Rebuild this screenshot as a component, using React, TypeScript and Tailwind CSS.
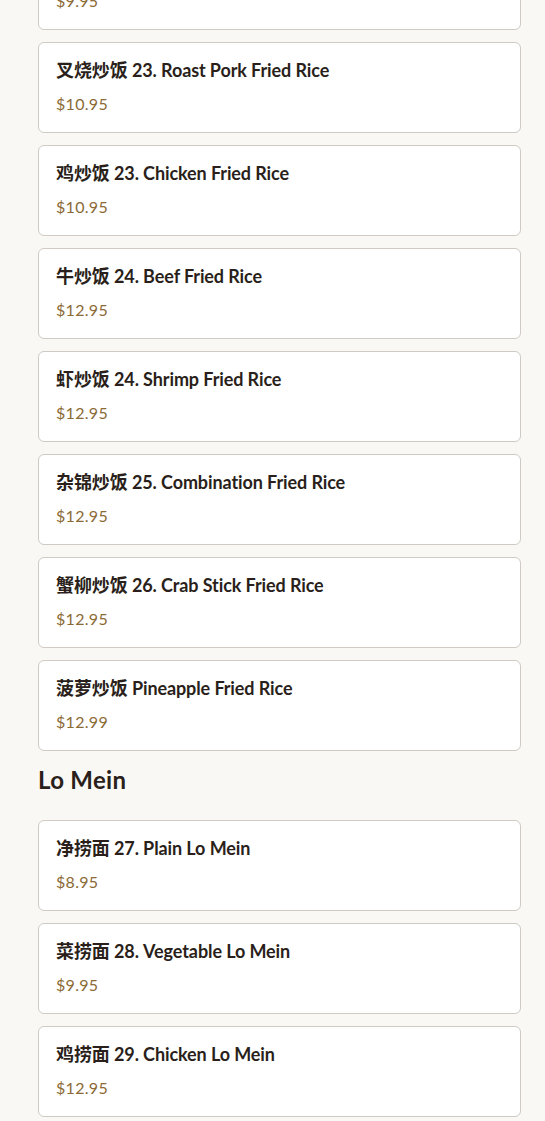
type Item = { zh: string; name: string; price: string };

const friedRice: Item[] = [
  { zh: "菜炒饭", name: "22. Vegetable Fried Rice", price: "$9.95" },
  { zh: "叉烧炒饭", name: "23. Roast Pork Fried Rice", price: "$10.95" },
  { zh: "鸡炒饭", name: "23. Chicken Fried Rice", price: "$10.95" },
  { zh: "牛炒饭", name: "24. Beef Fried Rice", price: "$12.95" },
  { zh: "虾炒饭", name: "24. Shrimp Fried Rice", price: "$12.95" },
  { zh: "杂锦炒饭", name: "25. Combination Fried Rice", price: "$12.95" },
  { zh: "蟹柳炒饭", name: "26. Crab Stick Fried Rice", price: "$12.95" },
  { zh: "菠萝炒饭", name: "Pineapple Fried Rice", price: "$12.99" },
];

const loMein: Item[] = [
  { zh: "净捞面", name: "27. Plain Lo Mein", price: "$8.95" },
  { zh: "菜捞面", name: "28. Vegetable Lo Mein", price: "$9.95" },
  { zh: "鸡捞面", name: "29. Chicken Lo Mein", price: "$12.95" },
];

function MenuCard({ item }: { item: Item }) {
  return (
    <div className="flex flex-col gap-2 rounded-md border border-[#cfcac4] bg-white px-[17px] pt-[13px] pb-4">
      <div className="text-lg leading-7 font-bold text-[#2a1f1a] tracking-[-0.1px]">
        {item.zh} {item.name}
      </div>
      <div className="text-base leading-6 tracking-[0.3px] text-[#8b6a35]">{item.price}</div>
    </div>
  );
}

export default function App() {
  return (
    <div
      className="h-screen overflow-hidden bg-[#faf8f5] px-[38px] pr-6"
      style={{ fontFamily: "Lato, 'Noto Sans', 'Noto Sans CJK SC', sans-serif" }}
    >
      <div className="-mt-[61px] flex flex-col gap-3">
        {friedRice.map((item, i) => (
          <MenuCard key={i} item={item} />
        ))}
      </div>
      <h2 className="mt-[13px] mb-6 text-2xl leading-8 font-bold tracking-[0.3px] text-[#2a1f1a]">Lo Mein</h2>
      <div className="flex flex-col gap-3">
        {loMein.map((item, i) => (
          <MenuCard key={i} item={item} />
        ))}
      </div>
    </div>
  );
}
